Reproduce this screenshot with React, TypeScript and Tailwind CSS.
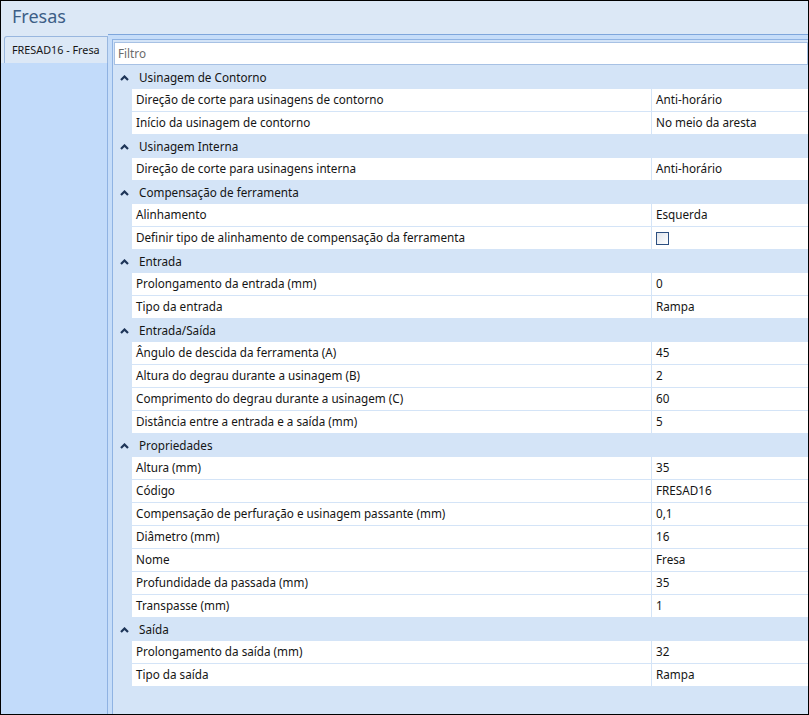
import React from 'react';

type Row = { label: string; value?: string; check?: boolean };
type Category = { title: string; rows: Row[] };

const categories: Category[] = [
  {
    title: 'Usinagem de Contorno',
    rows: [
      { label: 'Direção de corte para usinagens de contorno', value: 'Anti-horário' },
      { label: 'Início da usinagem de contorno', value: 'No meio da aresta' },
    ],
  },
  {
    title: 'Usinagem Interna',
    rows: [{ label: 'Direção de corte para usinagens interna', value: 'Anti-horário' }],
  },
  {
    title: 'Compensação de ferramenta',
    rows: [
      { label: 'Alinhamento', value: 'Esquerda' },
      { label: 'Definir tipo de alinhamento de compensação da ferramenta', check: true },
    ],
  },
  {
    title: 'Entrada',
    rows: [
      { label: 'Prolongamento da entrada (mm)', value: '0' },
      { label: 'Tipo da entrada', value: 'Rampa' },
    ],
  },
  {
    title: 'Entrada/Saída',
    rows: [
      { label: 'Ângulo de descida da ferramenta (A)', value: '45' },
      { label: 'Altura do degrau durante a usinagem (B)', value: '2' },
      { label: 'Comprimento do degrau durante a usinagem (C)', value: '60' },
      { label: 'Distância entre a entrada e a saída (mm)', value: '5' },
    ],
  },
  {
    title: 'Propriedades',
    rows: [
      { label: 'Altura (mm)', value: '35' },
      { label: 'Código', value: 'FRESAD16' },
      { label: 'Compensação de perfuração e usinagem passante (mm)', value: '0,1' },
      { label: 'Diâmetro (mm)', value: '16' },
      { label: 'Nome', value: 'Fresa' },
      { label: 'Profundidade da passada (mm)', value: '35' },
      { label: 'Transpasse (mm)', value: '1' },
    ],
  },
  {
    title: 'Saída',
    rows: [
      { label: 'Prolongamento da saída (mm)', value: '32' },
      { label: 'Tipo da saída', value: 'Rampa' },
    ],
  },
];

// solid up chevron used on category rows
const Caret = () => (
  <svg width="9" height="6" viewBox="0 0 9 6" className="shrink-0">
    <path d="M1 5 L4.5 1.5 L8 5" fill="none" stroke="#1e3558" strokeWidth="2.2" strokeLinejoin="miter" />
  </svg>
);

export default function App() {
  return (
    <div
      className="w-[809px] h-[715px] border border-black bg-[#dce8f6] flex flex-col overflow-hidden text-[11.7px] text-[#151515]"
      style={{ fontFamily: '"Segoe UI", "Noto Sans", "Open Sans", sans-serif' }}
    >
      {/* Title */}
      <div className="h-[29px] shrink-0 pl-[11px] flex items-center text-[18px] text-[#3d5e86] leading-none">
        Fresas
      </div>

      <div className="flex-1 flex min-h-0">
        {/* Left tabs */}
        <div className="w-[107px] shrink-0 flex flex-col">
          <div className="h-[6px] shrink-0" />
          <div className="ml-[3px] h-[27px] shrink-0 border border-b-0 border-[#99b7df] rounded-tl-[3px] bg-[#dce8f6] flex items-center pl-[7px] text-[10.8px] whitespace-nowrap overflow-hidden">
            FRESAD16 - Fresa
          </div>
          <div className="flex-1 bg-[#c2dbfa] border-r border-[#8fb2e2]" />
        </div>

        {/* Content */}
        <div className="flex-1 flex flex-col min-w-0 mt-[4px] border-t border-[#7ea6dc] bg-[#c6ddf9] pt-[4px] pl-[4px]">
          <div className="flex-1 flex flex-col border-l border-t border-[#8fb3e3] bg-[#d4e4f7] pt-[2px] pl-[1px]">
            <div className="h-[23px] shrink-0 bg-white border border-[#a7c1e4] flex items-center pl-[3px] text-[#6b6b6b]">
              Filtro
            </div>
            <div className="mt-[1px] flex flex-col">
              {categories.map((c) => (
                <React.Fragment key={c.title}>
                  <div className="h-[23px] flex items-center gap-[10px] pl-[6px] bg-[#d4e4f7]">
                    <Caret />
                    <span>{c.title}</span>
                  </div>
                  {c.rows.map((r) => (
                    <div key={r.label} className="h-[23px] flex pl-[18px] bg-[#d4e4f7]">
                      <div className="w-[520px] shrink-0 bg-white border-b border-r border-[#d4e4f7] flex items-center pl-[4px] whitespace-nowrap overflow-hidden">
                        {r.label}
                      </div>
                      <div className="flex-1 bg-white border-b border-[#d4e4f7] flex items-center pl-[4px] whitespace-nowrap">
                        {r.check ? (
                          <span className="w-[13px] h-[13px] border border-[#2c4f80] bg-gradient-to-br from-[#dfe4ec] to-white" />
                        ) : (
                          r.value
                        )}
                      </div>
                    </div>
                  ))}
                </React.Fragment>
              ))}
            </div>
          </div>
        </div>
      </div>
    </div>
  );
}
